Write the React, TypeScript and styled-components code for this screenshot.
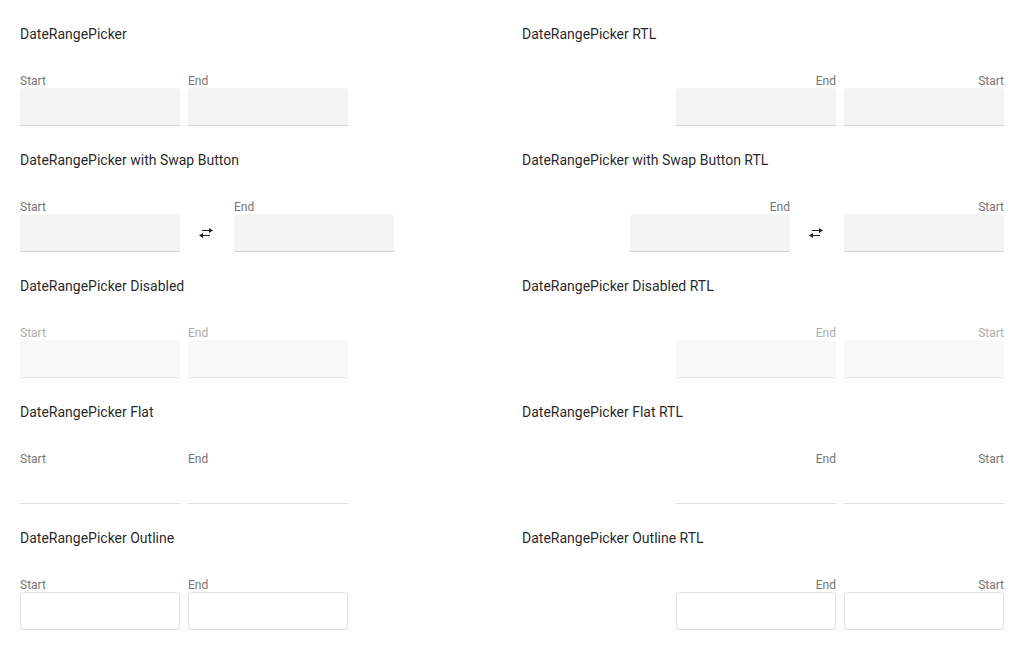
import React from "react";
import styled, { createGlobalStyle, css } from "styled-components";

type Variant = "standard" | "disabled" | "flat" | "outline";

const GlobalStyle = createGlobalStyle`
  *, *::before, *::after { box-sizing: border-box; }
  body {
    margin: 0;
    background: #fff;
    color: rgba(0, 0, 0, 0.87);
    font-family: Roboto, sans-serif;
    font-size: 14px;
  }
`;

const Grid = styled.main`
  display: grid;
  grid-template-columns: 482px 482px;
  grid-auto-rows: 106px;
  gap: 20px;
  padding: 24px 20px 0;
`;

const Example = styled.section`
  display: flex;
  flex-direction: column;
`;

const Title = styled.h2`
  margin: 0 0 30px;
  font-size: 14px;
  font-weight: 400;
  line-height: 20px;
`;

const Picker = styled.div`
  display: flex;
  align-items: flex-end;
  gap: 8px;
`;

const Field = styled.label<{ $disabled: boolean }>`
  display: flex;
  flex-direction: column;
  width: 160px;
  font-size: 12px;
  line-height: 14px;
  color: ${(p) => (p.$disabled ? "#acacac" : "#757575")};
`;

const boxes = {
  standard: css`
    background: #f4f4f4;
    border-bottom: 1px solid #d3d3d3;
    border-radius: 4px 4px 0 0;
  `,
  disabled: css`
    background: #f8f8f8;
    border-bottom: 1px solid #e4e4e4;
    border-radius: 4px 4px 0 0;
  `,
  flat: css`
    border-bottom: 1px solid #dedede;
  `,
  outline: css`
    border: 1px solid #dedede;
    border-radius: 4px;
  `,
};

const Box = styled.span<{ $variant: Variant }>`
  height: 38px;
  ${(p) => boxes[p.$variant]}
`;

const SwapButton = styled.button`
  display: flex;
  align-items: center;
  justify-content: center;
  width: 38px;
  height: 38px;
  padding: 0;
  border: 0;
  background: transparent;
  color: rgba(0, 0, 0, 0.87);
`;

const Icon = styled.svg`
  display: block;
  margin-right: 2px;
`;

const SwapIcon = () => (
  <Icon width="16" height="16" viewBox="0 0 16 16" fill="currentColor">
    <path d="M4 5h7V3l4 2.500-4 2.500V6H4zM12 11H5v2l-4-2.500L5 8v2h7z" />
  </Icon>
);

interface ExampleProps {
  title: string;
  variant?: Variant;
  swap?: boolean;
  rtl?: boolean;
}

const DateRangeExample = ({ title, variant = "standard", swap = false, rtl = false }: ExampleProps) => (
  <Example>
    <Title>{title}</Title>
    <Picker dir={rtl ? "rtl" : "ltr"}>
      <Field $disabled={variant === "disabled"}>
        Start
        <Box $variant={variant} />
      </Field>
      {swap && (
        <SwapButton aria-label="Swap">
          <SwapIcon />
        </SwapButton>
      )}
      <Field $disabled={variant === "disabled"}>
        End
        <Box $variant={variant} />
      </Field>
    </Picker>
  </Example>
);

const examples: ExampleProps[] = [
  { title: "DateRangePicker" },
  { title: "DateRangePicker with Swap Button", swap: true },
  { title: "DateRangePicker Disabled", variant: "disabled" },
  { title: "DateRangePicker Flat", variant: "flat" },
  { title: "DateRangePicker Outline", variant: "outline" },
];

export default function App() {
  return (
    <>
      <GlobalStyle />
      <Grid>
        {examples.map((e) => (
          <React.Fragment key={e.title}>
            <DateRangeExample {...e} />
            <DateRangeExample {...e} title={`${e.title} RTL`} rtl />
          </React.Fragment>
        ))}
      </Grid>
    </>
  );
}
